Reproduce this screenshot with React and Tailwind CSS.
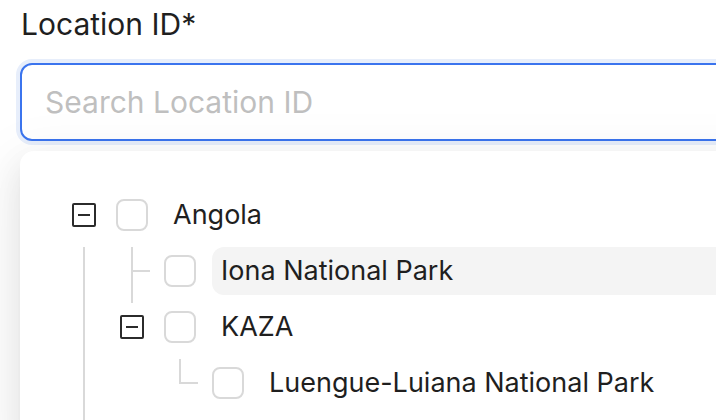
import React from 'react'

const nodes = [
  { title: 'Angola', level: 0, type: 'open', indents: [] },
  { title: 'Iona National Park', level: 1, type: 'leaf', indents: [true], active: true },
  { title: 'KAZA', level: 1, type: 'open', indents: [true] },
  { title: 'Luengue-Luiana National Park', level: 2, type: 'lastLeaf', indents: [true, false] },
]

function Switcher({ type }) {
  if (type === 'open') {
    return (
      <div className="w-[44px] h-[48px] flex items-center shrink-0">
        <div className="w-[24px] h-[24px] border-2 border-[#2b2b2b] rounded-[2px] flex items-center justify-center">
          <div className="w-[12px] h-[2px] bg-[#2b2b2b]" />
        </div>
      </div>
    )
  }
  return (
    <div className="relative w-[44px] self-stretch shrink-0">
      {type === 'leaf' ? (
        <div className="absolute left-[11px] top-0 bottom-0 w-[2px] bg-[#d9d9d9]" />
      ) : (
        <div className="absolute left-[11px] top-0 h-[24px] w-[2px] bg-[#d9d9d9]" />
      )}
      <div className="absolute left-[11px] top-[23px] w-[19px] h-[2px] bg-[#d9d9d9]" />
    </div>
  )
}

function TreeRow({ node }) {
  return (
    <div className="flex h-[56px]">
      {node.indents.map((line, i) => (
        <div key={i} className="relative w-[48px] self-stretch shrink-0">
          {line && <div className="absolute left-[11px] top-0 bottom-0 w-[2px] bg-[#d9d9d9]" />}
        </div>
      ))}
      <Switcher type={node.type} />
      <div className="h-[48px] flex items-center shrink-0">
        <div className="w-[32px] h-[32px] rounded-[8px] border-2 border-[#d9d9d9] bg-white" />
      </div>
      <div
        className={
          'ml-[16px] h-[48px] flex items-center px-[9px] rounded-[12px] text-[27px] text-[#1f1f1f] whitespace-nowrap ' +
          (node.active ? 'bg-[#f4f4f4] flex-1' : '')
        }
      >
        {node.title}
      </div>
    </div>
  )
}

export default function App() {
  return (
    <div className="w-[716px] h-[420px] overflow-hidden bg-white font-['Inter','Noto_Sans',sans-serif]">
      <div className="pl-[20px] w-[780px]">
        <p className="pt-[4px] pl-[1px] text-[30px] leading-[40px] text-[#1f1f1f]">Location ID*</p>

        <div className="mt-[19px] h-[78px] border-2 border-[#3b74ee] rounded-[12px] shadow-[0_0_0_4px_#e7eefb] flex items-center pl-[23px] bg-white">
          <input
            type="text"
            placeholder="Search Location ID"
            className="w-full outline-none bg-transparent text-[30px] text-[#1f1f1f] placeholder:text-[#bfbfbf]"
          />
        </div>

        <div className="relative z-10 mt-[10px] h-[300px] bg-white rounded-[14px] shadow-[0_12px_32px_0_rgba(0,0,0,0.08),0_6px_12px_-8px_rgba(0,0,0,0.12),0_18px_56px_16px_rgba(0,0,0,0.05)] pt-[40px] pl-[52px]">
          {nodes.map((n) => (
            <TreeRow key={n.title} node={n} />
          ))}
          <div className="flex h-[40px]">
            <div className="relative w-[48px] self-stretch">
              <div className="absolute left-[11px] top-0 bottom-0 w-[2px] bg-[#d9d9d9]" />
            </div>
          </div>
        </div>
      </div>
    </div>
  )
}
